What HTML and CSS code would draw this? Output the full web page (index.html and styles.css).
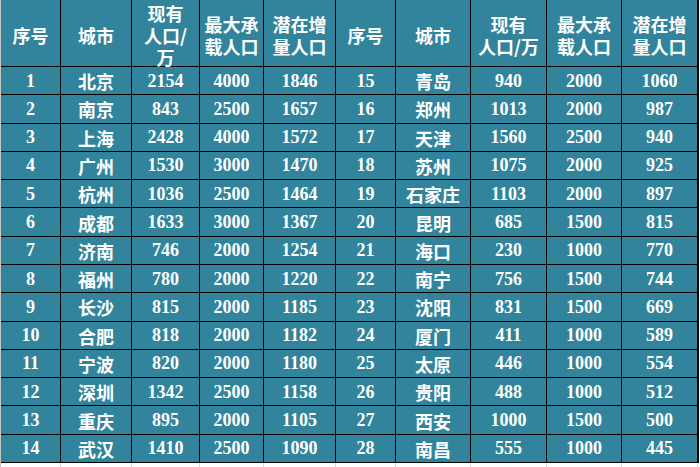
FILE: index.html
```html
<!DOCTYPE html>
<html lang="zh-CN">
<head>
<meta charset="utf-8">
<title>城市人口承载表</title>
<link rel="stylesheet" href="styles.css">
</head>
<body>
<div class="sheet">
  <div class="grid" role="table">
    <div class="cell head">序号</div>
    <div class="cell head">城市</div>
    <div class="cell head">现有<br>人口/<br>万</div>
    <div class="cell head">最大承<br>载人口</div>
    <div class="cell head">潜在增<br>量人口</div>
    <div class="cell head">序号</div>
    <div class="cell head">城市</div>
    <div class="cell head">现有<br>人口/万</div>
    <div class="cell head">最大承<br>载人口</div>
    <div class="cell head">潜在增<br>量人口</div>

    <div class="cell num">1</div><div class="cell city">北京</div><div class="cell num">2154</div><div class="cell num">4000</div><div class="cell num">1846</div>
    <div class="cell num">15</div><div class="cell city">青岛</div><div class="cell num">940</div><div class="cell num">2000</div><div class="cell num">1060</div>

    <div class="cell num">2</div><div class="cell city">南京</div><div class="cell num">843</div><div class="cell num">2500</div><div class="cell num">1657</div>
    <div class="cell num">16</div><div class="cell city">郑州</div><div class="cell num">1013</div><div class="cell num">2000</div><div class="cell num">987</div>

    <div class="cell num">3</div><div class="cell city">上海</div><div class="cell num">2428</div><div class="cell num">4000</div><div class="cell num">1572</div>
    <div class="cell num">17</div><div class="cell city">天津</div><div class="cell num">1560</div><div class="cell num">2500</div><div class="cell num">940</div>

    <div class="cell num">4</div><div class="cell city">广州</div><div class="cell num">1530</div><div class="cell num">3000</div><div class="cell num">1470</div>
    <div class="cell num">18</div><div class="cell city">苏州</div><div class="cell num">1075</div><div class="cell num">2000</div><div class="cell num">925</div>

    <div class="cell num">5</div><div class="cell city">杭州</div><div class="cell num">1036</div><div class="cell num">2500</div><div class="cell num">1464</div>
    <div class="cell num">19</div><div class="cell city">石家庄</div><div class="cell num">1103</div><div class="cell num">2000</div><div class="cell num">897</div>

    <div class="cell num">6</div><div class="cell city">成都</div><div class="cell num">1633</div><div class="cell num">3000</div><div class="cell num">1367</div>
    <div class="cell num">20</div><div class="cell city">昆明</div><div class="cell num">685</div><div class="cell num">1500</div><div class="cell num">815</div>

    <div class="cell num">7</div><div class="cell city">济南</div><div class="cell num">746</div><div class="cell num">2000</div><div class="cell num">1254</div>
    <div class="cell num">21</div><div class="cell city">海口</div><div class="cell num">230</div><div class="cell num">1000</div><div class="cell num">770</div>

    <div class="cell num">8</div><div class="cell city">福州</div><div class="cell num">780</div><div class="cell num">2000</div><div class="cell num">1220</div>
    <div class="cell num">22</div><div class="cell city">南宁</div><div class="cell num">756</div><div class="cell num">1500</div><div class="cell num">744</div>

    <div class="cell num">9</div><div class="cell city">长沙</div><div class="cell num">815</div><div class="cell num">2000</div><div class="cell num">1185</div>
    <div class="cell num">23</div><div class="cell city">沈阳</div><div class="cell num">831</div><div class="cell num">1500</div><div class="cell num">669</div>

    <div class="cell num">10</div><div class="cell city">合肥</div><div class="cell num">818</div><div class="cell num">2000</div><div class="cell num">1182</div>
    <div class="cell num">24</div><div class="cell city">厦门</div><div class="cell num">411</div><div class="cell num">1000</div><div class="cell num">589</div>

    <div class="cell num">11</div><div class="cell city">宁波</div><div class="cell num">820</div><div class="cell num">2000</div><div class="cell num">1180</div>
    <div class="cell num">25</div><div class="cell city">太原</div><div class="cell num">446</div><div class="cell num">1000</div><div class="cell num">554</div>

    <div class="cell num">12</div><div class="cell city">深圳</div><div class="cell num">1342</div><div class="cell num">2500</div><div class="cell num">1158</div>
    <div class="cell num">26</div><div class="cell city">贵阳</div><div class="cell num">488</div><div class="cell num">1000</div><div class="cell num">512</div>

    <div class="cell num">13</div><div class="cell city">重庆</div><div class="cell num">895</div><div class="cell num">2000</div><div class="cell num">1105</div>
    <div class="cell num">27</div><div class="cell city">西安</div><div class="cell num">1000</div><div class="cell num">1500</div><div class="cell num">500</div>

    <div class="cell num">14</div><div class="cell city">武汉</div><div class="cell num">1410</div><div class="cell num">2500</div><div class="cell num">1090</div>
    <div class="cell num">28</div><div class="cell city">南昌</div><div class="cell num">555</div><div class="cell num">1000</div><div class="cell num">445</div>
  </div>
  <div class="filler">
    <div></div><div></div><div></div><div></div><div></div>
    <div></div><div></div><div></div><div></div><div></div>
  </div>
</div>
</body>
</html>
```

FILE: styles.css
```css
html, body {
  margin: 0;
  padding: 0;
  background: #ffffff;
}

.sheet {
  width: 699px;
  border-left: 1px solid #c4c4c4;
}

.grid,
.filler {
  display: grid;
  grid-template-columns: 59px 70px 67px 63px 71px 59px 74px 75px 74px 75px;
  column-gap: 1px;
}

.grid {
  width: 697px;
  background: #000000;
  row-gap: 1px;
  padding: 0 1px 1px 0;
  grid-template-rows: 66px repeat(14, 27.286px);
}

.cell {
  background: #31849b;
  color: #ffffff;
  display: flex;
  align-items: center;
  justify-content: center;
  text-align: center;
  font-size: 18px;
  font-weight: bold;
}

.head {
  font-family: "Noto Sans CJK SC", sans-serif;
  line-height: 22px;
  padding-top: 3px;
  box-sizing: border-box;
}

.city {
  font-family: "Noto Sans CJK SC", sans-serif;
  line-height: 1;
  padding-top: 1px;
}

.num {
  font-family: "Liberation Serif", "Noto Sans CJK SC", serif;
  line-height: 1;
}

.filler {
  width: 697px;
  height: 4px;
  background: #d9d9d9;
}

.filler div {
  background: #ffffff;
}
```
